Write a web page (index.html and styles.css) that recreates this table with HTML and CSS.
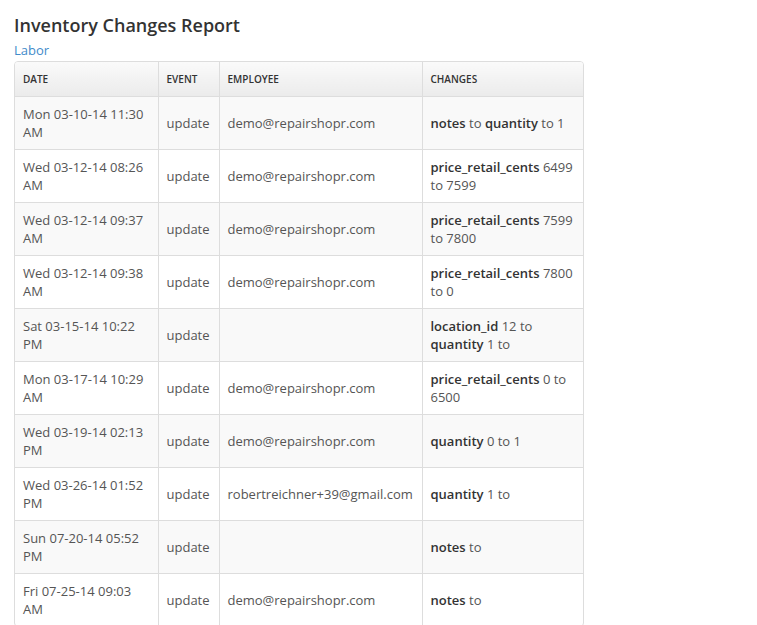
FILE: index.html
```html
<!DOCTYPE html>
<html>
<head>
<meta charset="utf-8">
<link rel="stylesheet" href="styles.css">
</head>
<body>
<div class="page">
  <h1 class="title">Inventory Changes Report</h1>
  <a class="link" href="#">Labor</a>
  <div class="table-wrap">
    <table class="report">
      <colgroup>
        <col class="c-date"><col class="c-event"><col class="c-emp"><col class="c-chg">
      </colgroup>
      <thead>
        <tr><th>Date</th><th>Event</th><th>Employee</th><th>Changes</th></tr>
      </thead>
      <tbody>
        <tr><td>Mon 03-10-14 11:30 AM</td><td>update</td><td>demo@repairshopr.com</td><td><b>notes</b> to <b>quantity</b> to 1</td></tr>
        <tr><td>Wed 03-12-14 08:26 AM</td><td>update</td><td>demo@repairshopr.com</td><td><b>price_retail_cents</b> 6499 to 7599</td></tr>
        <tr><td>Wed 03-12-14 09:37 AM</td><td>update</td><td>demo@repairshopr.com</td><td><b>price_retail_cents</b> 7599 to 7800</td></tr>
        <tr><td>Wed 03-12-14 09:38 AM</td><td>update</td><td>demo@repairshopr.com</td><td><b>price_retail_cents</b> 7800 to 0</td></tr>
        <tr><td>Sat 03-15-14 10:22 PM</td><td>update</td><td></td><td><b>location_id</b> 12 to <b>quantity</b> 1 to</td></tr>
        <tr><td>Mon 03-17-14 10:29 AM</td><td>update</td><td>demo@repairshopr.com</td><td><b>price_retail_cents</b> 0 to 6500</td></tr>
        <tr><td>Wed 03-19-14 02:13 PM</td><td>update</td><td>demo@repairshopr.com</td><td><b>quantity</b> 0 to 1</td></tr>
        <tr><td>Wed 03-26-14 01:52 PM</td><td>update</td><td>robertreichner+39@gmail.com</td><td><b>quantity</b> 1 to</td></tr>
        <tr><td>Sun 07-20-14 05:52 PM</td><td>update</td><td></td><td><b>notes</b> to</td></tr>
        <tr><td>Fri 07-25-14 09:03 AM</td><td>update</td><td>demo@repairshopr.com</td><td><b>notes</b> to</td></tr>
      </tbody>
    </table>
  </div>
</div>
</body>
</html>
```
FILE: styles.css
```css
html, body {
  margin: 0;
  padding: 0;
  background: #fff;
}
body {
  font-family: "Open Sans", "Liberation Sans", sans-serif;
  color: #555;
  font-size: 13px;
}
.page {
  padding: 10px 14px 0 14px;
}
.title {
  margin: 0;
  font-size: 18px;
  line-height: 30px;
  font-weight: 600;
  color: #333;
}
.link {
  display: block;
  color: #428bca;
  text-decoration: none;
  font-size: 13px;
  line-height: 18px;
  margin-top: 1px;
  margin-bottom: 2px;
}
.table-wrap {
  width: 568px;
  border: 1px solid #ddd;
  border-radius: 4px;
  overflow: hidden;
}
.report {
  width: 100%;
  border-collapse: collapse;
  table-layout: fixed;
}
.c-date { width: 143px; }
.c-event { width: 61px; }
.c-emp { width: 203px; }
.c-chg { width: auto; }
.report th {
  background: linear-gradient(#fafafa, #ebebeb);
  color: #333;
  font-size: 10px;
  font-weight: 600;
  text-transform: uppercase;
  text-align: left;
  padding: 8px 8px;
  line-height: 18px;
  border-left: 1px solid #ddd;
  border-bottom: 1px solid #ddd;
}
.report td {
  padding: 8px 8px;
  line-height: 18px;
  vertical-align: middle;
  border-left: 1px solid #ddd;
  border-top: 1px solid #ddd;
  height: 36px;
}
.report th:first-child, .report td:first-child {
  border-left: none;
}
.report tbody tr:first-child td {
  border-top: none;
}
.report tbody tr:nth-child(odd) td {
  background: #f9f9f9;
}
.report b {
  font-weight: 600;
  color: #333;
}
```
